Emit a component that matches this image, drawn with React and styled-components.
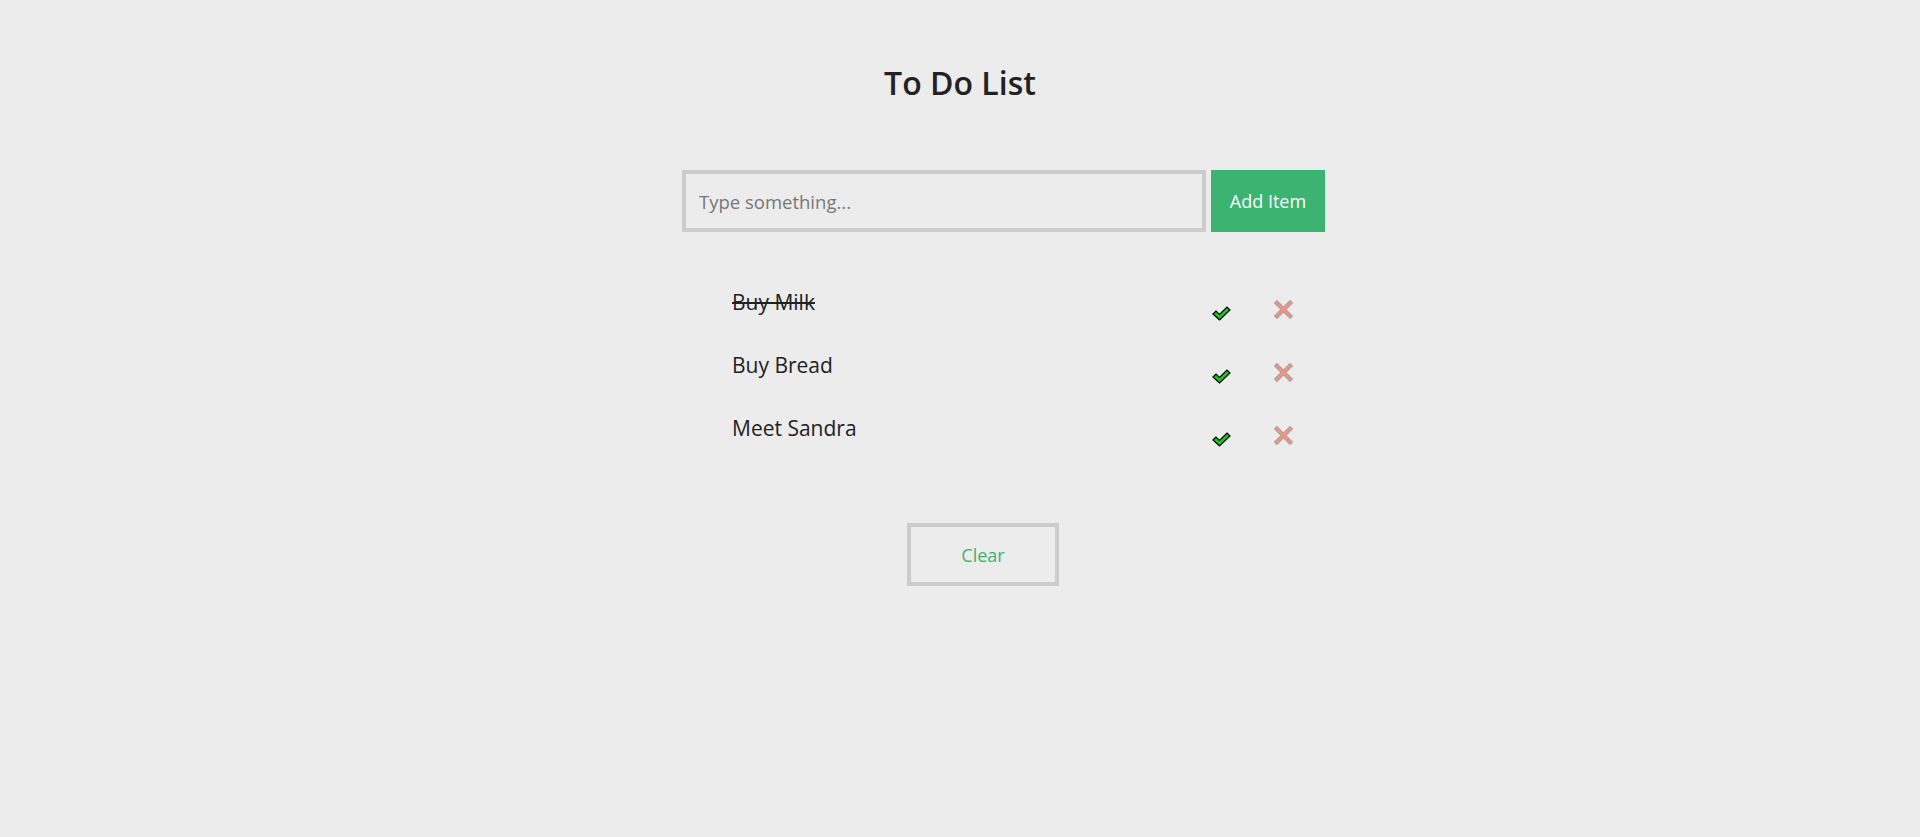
import React, { useState } from "react";
import styled, { createGlobalStyle } from "styled-components";

const GlobalStyle = createGlobalStyle`
  body {
    margin: 0;
    background-color: #ececec;
    font-family: "Open Sans", "Liberation Sans", sans-serif;
    color: #222;
  }
`;

const Container = styled.div`
  width: 556px;
  margin: 0 auto;
  padding-top: 63px;
`;

const Title = styled.h1`
  margin: 0;
  font-size: 32px;
  line-height: 40px;
  font-weight: 600;
  text-align: center;
  color: #222;
`;

const Form = styled.form`
  display: flex;
  gap: 5px;
  margin-top: 67px;
  width: 643px;
`;

const Input = styled.input`
  box-sizing: border-box;
  width: 524px;
  height: 62px;
  border: 4px solid #ccc;
  background: transparent;
  padding: 0 13px;
  font-family: inherit;
  font-size: 18.5px;
  color: #222;
  outline: none;

  &::placeholder {
    color: #777;
  }
`;

const AddButton = styled.button`
  width: 114px;
  height: 62px;
  border: none;
  background-color: #3cb371;
  color: #fff;
  font-family: inherit;
  font-size: 18px;
  cursor: pointer;
`;

const List = styled.ul`
  list-style: none;
  margin: 55px 0 0;
  padding: 0 0 0 50px;
  width: 561px;
`;

const Row = styled.li`
  display: flex;
  align-items: flex-start;
  height: 63px;
`;

const ItemText = styled.span`
  flex: 1;
  padding-top: 3px;
  font-size: 21px;
  line-height: 25px;
  text-decoration: ${(props) => (props.done ? "line-through" : "none")};
  text-decoration-thickness: 2px;
`;

const IconButton = styled.button`
  display: flex;
  padding: 0;
  border: none;
  background: none;
  cursor: pointer;
  margin-top: ${(props) => props.top}px;
  margin-left: ${(props) => props.left}px;
`;

const ClearButton = styled.button`
  display: block;
  box-sizing: border-box;
  width: 152px;
  height: 63px;
  margin: 47px 0 0 225px;
  border: 4px solid #ccc;
  background: transparent;
  color: #3cb371;
  font-family: inherit;
  font-size: 18px;
  cursor: pointer;
`;

const CheckIcon = () => (
  <svg width="19" height="15" viewBox="0 0 19 15">
    <path
      d="M1 8 L4 5 L7.5 8.5 L15 1 L18 4 L7.5 14 Z"
      fill="#1fc21f"
      stroke="#000"
      strokeWidth="1.2"
      strokeLinejoin="miter"
    />
  </svg>
);

const CrossIcon = () => (
  <svg width="19" height="19" viewBox="0 0 19 19">
    <g strokeLinecap="square">
      <path d="M3 3 L16 16 M16 3 L3 16" stroke="#a0a0a0" strokeWidth="4.5" />
      <path d="M3 3 L16 16 M16 3 L3 16" stroke="#ee9484" strokeWidth="2.8" />
    </g>
  </svg>
);

const initial = [
  { text: "Buy Milk", done: true },
  { text: "Buy Bread", done: false },
  { text: "Meet Sandra", done: false },
];

const App = () => {
  const [items, setItems] = useState(initial);
  const [value, setValue] = useState("");

  const handleAdd = (e) => {
    e.preventDefault();
    if (!value.trim()) return;
    setItems([...items, { text: value, done: false }]);
    setValue("");
  };

  const toggle = (i) =>
    setItems(items.map((it, a) => (a === i ? { ...it, done: !it.done } : it)));

  const remove = (i) => setItems(items.filter((_, a) => a !== i));

  return (
    <>
      <GlobalStyle />
      <Container>
        <Title>To Do List</Title>
        <Form onSubmit={handleAdd}>
          <Input
            placeholder="Type something..."
            value={value}
            onChange={(e) => setValue(e.target.value)}
          />
          <AddButton type="submit">Add Item</AddButton>
        </Form>
        <List>
          {items.map((item, i) => (
            <Row key={i}>
              <ItemText done={item.done}>{item.text}</ItemText>
              <IconButton top={19} left={0} onClick={() => toggle(i)}>
                <CheckIcon />
              </IconButton>
              <IconButton top={13} left={43} onClick={() => remove(i)}>
                <CrossIcon />
              </IconButton>
            </Row>
          ))}
        </List>
        <ClearButton onClick={() => setItems([])}>Clear</ClearButton>
      </Container>
    </>
  );
};

export default App;
